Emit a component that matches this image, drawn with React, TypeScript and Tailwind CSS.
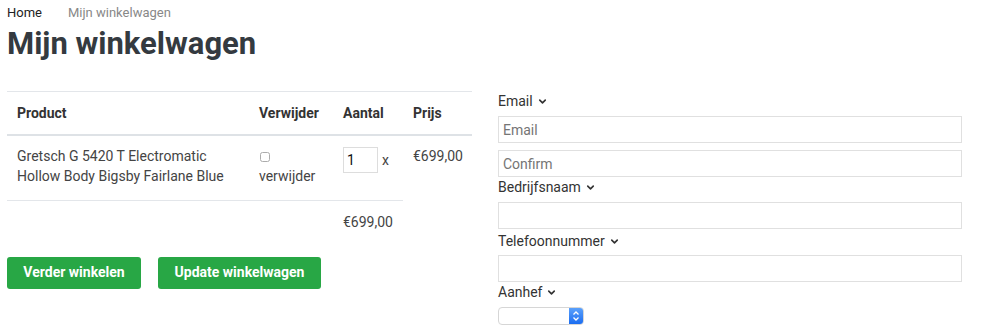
import { ChevronDown } from 'lucide-react'

const font = { fontFamily: 'Roboto, "Liberation Sans", sans-serif' }

function FieldLabel({ text }: { text: string }) {
  return (
    <div className="flex items-center gap-[4px] h-[20px] text-[14px] text-[#333]">
      <span>{text}</span>
      <ChevronDown size={11} strokeWidth={3.5} className="text-[#333]" />
    </div>
  )
}

function TextInput({ placeholder }: { placeholder?: string }) {
  return (
    <input
      placeholder={placeholder}
      className="block w-full h-[27px] border border-[#e0e0e0] px-[4px] text-[14px] text-[#333] placeholder:text-[#757575] outline-none"
    />
  )
}

function MacSelect() {
  return (
    <div className="flex w-[86px] h-[18px] rounded-[4px] border border-[#d6d6d6] bg-white overflow-hidden">
      <div className="flex-1" />
      <div className="w-[14px] h-full bg-gradient-to-b from-[#5aa0fb] to-[#1a6cf0] flex items-center justify-center">
        <svg width="8" height="12" viewBox="0 0 8 12" fill="none" stroke="white" strokeWidth="1.3">
          <path d="M1.5 4.5 L4 2 L6.5 4.5" />
          <path d="M1.5 7.5 L4 10 L6.5 7.5" />
        </svg>
      </div>
    </div>
  )
}

export default function App() {
  return (
    <div className="w-[1000px] h-[330px] bg-white px-[7px] overflow-hidden" style={font}>
      {/* breadcrumb */}
      <div className="flex gap-[26px] pt-[3px] h-[23px] text-[13px] leading-[20px]">
        <span className="text-[#222]">Home</span>
        <span className="text-[#888]">Mijn winkelwagen</span>
      </div>
      <h1 className="mt-[2px] text-[31px] leading-[38px] font-bold text-[#343a40]">Mijn winkelwagen</h1>

      <div className="flex mt-[28px]">
        {/* cart */}
        <div className="w-[465px]">
          <table className="w-full table-fixed border-collapse text-[14px] leading-[20px] text-[#333]">
            <colgroup>
              <col className="w-[242px]" />
              <col className="w-[84px]" />
              <col className="w-[70px]" />
              <col className="w-[69px]" />
            </colgroup>
            <thead>
              <tr className="border-t border-[#e3e6ea] border-b-2 border-b-[#dee2e6]">
                <th className="h-[43px] pl-[10px] pt-[1px] text-left font-bold">Product</th>
                <th className="pl-[10px] pt-[1px] text-left font-bold">Verwijder</th>
                <th className="pl-[10px] pt-[1px] text-left font-bold">Aantal</th>
                <th className="pl-[10px] pt-[1px] text-left font-bold">Prijs</th>
              </tr>
            </thead>
            <tbody>
              <tr className="h-[66px] align-top">
                <td className="pl-[10px] pt-[10px] text-[#444]">
                  Gretsch G 5420 T Electromatic Hollow Body Bigsby Fairlane Blue
                </td>
                <td className="pl-[10px] pt-[16px] text-[#444]">
                  <input type="checkbox" className="block w-[10px] h-[10px] m-0 ml-[1px] opacity-60" />
                  <div className="mt-[4px]">verwijder</div>
                </td>
                <td className="pl-[10px] pt-[11px]">
                  <div className="flex items-center gap-[4px]">
                    <input
                      defaultValue="1"
                      className="w-[35px] h-[26px] border border-[#ddd] px-[3px] text-[14px] text-[#111] outline-none"
                    />
                    <span className="text-[#444]">x</span>
                  </div>
                </td>
                <td className="pl-[10px] pt-[10px] text-[#444]">€699,00</td>
              </tr>
              <tr className="h-[42px]">
                <td className="border-t border-[#e3e6ea]" />
                <td className="border-t border-[#e3e6ea]" />
                <td className="border-t border-[#e3e6ea] pl-[10px] text-[#444]">€699,00</td>
                <td />
              </tr>
            </tbody>
          </table>

          <div className="flex gap-[17px] mt-[14px]">
            <button className="h-[32px] w-[134px] rounded-[3px] bg-[#28a745] text-white text-[14px] font-bold">
              Verder winkelen
            </button>
            <button className="h-[32px] w-[163px] rounded-[3px] bg-[#28a745] text-white text-[14px] font-bold">
              Update winkelwagen
            </button>
          </div>
        </div>

        {/* customer details */}
        <div className="w-[464px] ml-[26px]">
          <FieldLabel text="Email" />
          <div className="mt-[5px]">
            <TextInput placeholder="Email" />
          </div>
          <div className="mt-[7px]">
            <TextInput placeholder="Confirm" />
          </div>
          <FieldLabel text="Bedrijfsnaam" />
          <div className="mt-[5px]">
            <TextInput />
          </div>
          <div className="mt-[2px]">
            <FieldLabel text="Telefoonnummer" />
          </div>
          <div className="mt-[4px]">
            <TextInput />
          </div>
          <FieldLabel text="Aanhef" />
          <div className="mt-[5px]">
            <MacSelect />
          </div>
        </div>
      </div>
    </div>
  )
}
